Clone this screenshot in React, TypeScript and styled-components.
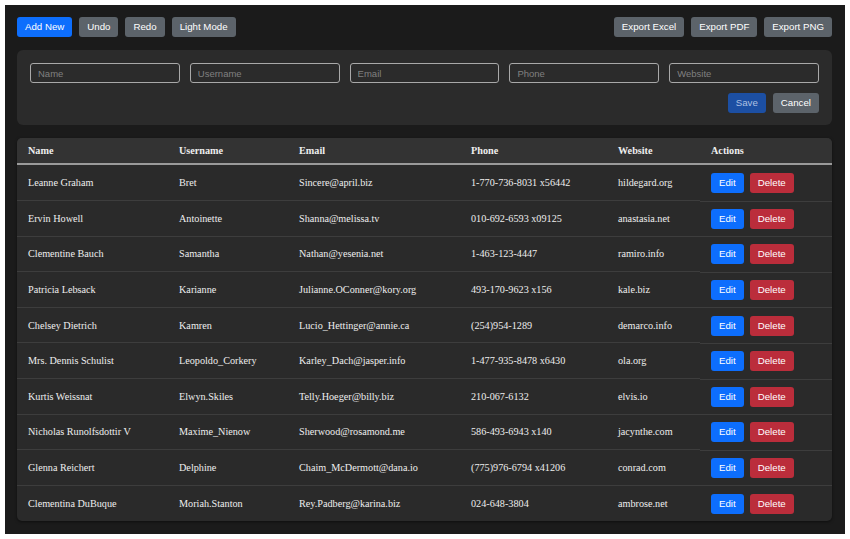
import styled, { createGlobalStyle } from "styled-components";

const GlobalStyle = createGlobalStyle`
  html, body {
    margin: 0;
    background: #ffffff;
  }
  body {
    padding: 5px;
    font-family: "Liberation Serif", serif;
  }
`;

const users = [
  ["Leanne Graham", "Bret", "Sincere@april.biz", "1-770-736-8031 x56442", "hildegard.org"],
  ["Ervin Howell", "Antoinette", "Shanna@melissa.tv", "010-692-6593 x09125", "anastasia.net"],
  ["Clementine Bauch", "Samantha", "Nathan@yesenia.net", "1-463-123-4447", "ramiro.info"],
  ["Patricia Lebsack", "Karianne", "Julianne.OConner@kory.org", "493-170-9623 x156", "kale.biz"],
  ["Chelsey Dietrich", "Kamren", "Lucio_Hettinger@annie.ca", "(254)954-1289", "demarco.info"],
  ["Mrs. Dennis Schulist", "Leopoldo_Corkery", "Karley_Dach@jasper.info", "1-477-935-8478 x6430", "ola.org"],
  ["Kurtis Weissnat", "Elwyn.Skiles", "Telly.Hoeger@billy.biz", "210-067-6132", "elvis.io"],
  ["Nicholas Runolfsdottir V", "Maxime_Nienow", "Sherwood@rosamond.me", "586-493-6943 x140", "jacynthe.com"],
  ["Glenna Reichert", "Delphine", "Chaim_McDermott@dana.io", "(775)976-6794 x41206", "conrad.com"],
  ["Clementina DuBuque", "Moriah.Stanton", "Rey.Padberg@karina.biz", "024-648-3804", "ambrose.net"],
];

const colWidths = [151, 120, 172, 147, 93, 132];

const Page = styled.div`
  background: #1b1b1b;
  min-height: 529px;
  box-sizing: border-box;
  padding: 12px 13px 13px 12px;
  display: flex;
  flex-direction: column;
  gap: 13px;
`;

const Toolbar = styled.div`
  display: flex;
  justify-content: space-between;
  align-items: center;
`;

const Group = styled.div`
  display: flex;
  gap: 7px;
`;

const tones = {
  primary: "#0d6efd",
  secondary: "#5c636a",
  danger: "#bb2d3b",
  save: "#1c4fa3",
};

const Button = styled.button<{ $tone: keyof typeof tones }>`
  font-family: "Liberation Sans", Arial, sans-serif;
  font-size: 9.7px;
  color: ${(p) => (p.$tone === "save" ? "#adc0e2" : "#ffffff")};
  background: ${(p) => tones[p.$tone]};
  border: none;
  border-radius: 3px;
  height: 20px;
  padding: 0 8px;
  cursor: pointer;
  line-height: 20px;
`;

const FormPanel = styled.div`
  background: #2b2b2b;
  border-radius: 6px;
  padding: 13px 13px 12px 13px;
  display: flex;
  flex-direction: column;
  gap: 10px;
`;

const Inputs = styled.div`
  display: grid;
  grid-template-columns: repeat(5, 1fr);
  gap: 10px;
`;

const Input = styled.input`
  box-sizing: border-box;
  height: 20px;
  background: #2b2b2b;
  border: 1px solid #a9a9a9;
  border-radius: 3px;
  padding: 0 7px;
  font-family: "Liberation Sans", Arial, sans-serif;
  font-size: 9.5px;
  color: #ddd;
  &::placeholder {
    color: #808080;
  }
`;

const FormActions = styled.div`
  display: flex;
  justify-content: flex-end;
  gap: 7px;
`;

const TableCard = styled.div`
  background: #2a2a2a;
  border-radius: 5px;
  overflow: hidden;
  box-shadow: 0 1px 3px rgba(0, 0, 0, 0.5);
`;

const Table = styled.table`
  width: 100%;
  border-collapse: collapse;
  table-layout: fixed;
  color: #eeeeee;
  font-family: "Liberation Serif", "Times New Roman", serif;
  font-size: 10.2px;
`;

const HeadCell = styled.th`
  text-align: left;
  font-weight: bold;
  background: #333333;
  height: 26px;
  padding: 0 11px;
  border-bottom: 2px solid #9a9a9a;
  box-sizing: border-box;
`;

const Row = styled.tr`
  height: 35.6px;
  & + & td {
    border-top: 1px solid #3d3d3d;
  }
`;

const Cell = styled.td`
  padding: 0 11px;
  white-space: nowrap;
`;

const ActionCell = styled(Cell)`
  display: flex;
  gap: 6px;
  align-items: center;
  height: 35.6px;
  box-sizing: border-box;
`;

export default function App() {
  return (
    <>
      <GlobalStyle />
      <Page>
        <Toolbar>
          <Group>
            <Button $tone="primary">Add New</Button>
            <Button $tone="secondary">Undo</Button>
            <Button $tone="secondary">Redo</Button>
            <Button $tone="secondary">Light Mode</Button>
          </Group>
          <Group>
            <Button $tone="secondary">Export Excel</Button>
            <Button $tone="secondary">Export PDF</Button>
            <Button $tone="secondary">Export PNG</Button>
          </Group>
        </Toolbar>

        <FormPanel>
          <Inputs>
            <Input placeholder="Name" />
            <Input placeholder="Username" />
            <Input placeholder="Email" />
            <Input placeholder="Phone" />
            <Input placeholder="Website" />
          </Inputs>
          <FormActions>
            <Button $tone="save">Save</Button>
            <Button $tone="secondary">Cancel</Button>
          </FormActions>
        </FormPanel>

        <TableCard>
          <Table>
            <colgroup>
              {colWidths.map((w, i) => (
                <col key={i} style={{ width: w }} />
              ))}
            </colgroup>
            <thead>
              <tr>
                <HeadCell>Name</HeadCell>
                <HeadCell>Username</HeadCell>
                <HeadCell>Email</HeadCell>
                <HeadCell>Phone</HeadCell>
                <HeadCell>Website</HeadCell>
                <HeadCell>Actions</HeadCell>
              </tr>
            </thead>
            <tbody>
              {users.map((u) => (
                <Row key={u[0]}>
                  {u.map((v, i) => (
                    <Cell key={i}>{v}</Cell>
                  ))}
                  <ActionCell>
                    <Button $tone="primary">Edit</Button>
                    <Button $tone="danger">Delete</Button>
                  </ActionCell>
                </Row>
              ))}
            </tbody>
          </Table>
        </TableCard>
      </Page>
    </>
  );
}
